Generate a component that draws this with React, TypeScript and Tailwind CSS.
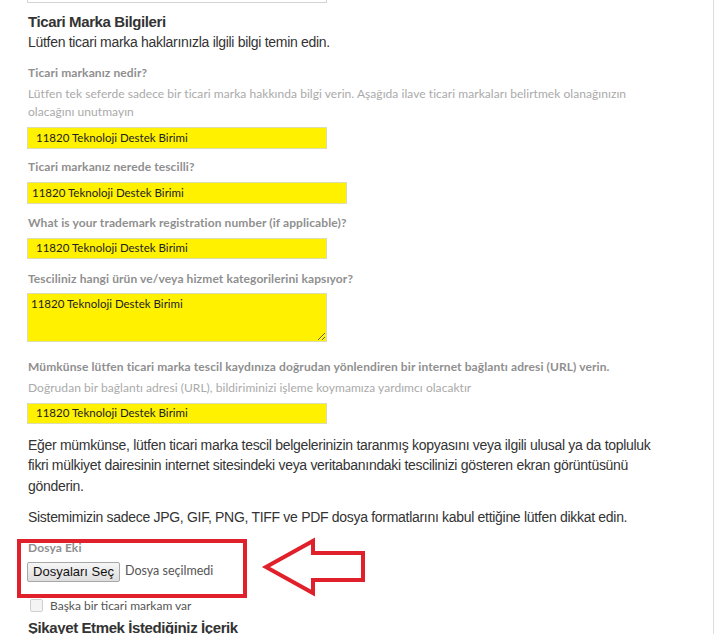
import React from "react";

const labelCls =
  "text-[12px] leading-[16px] font-bold text-[#8f8f8f] tracking-[0.1px] [font-family:Lato,sans-serif]";
const helpCls =
  "text-[12px] leading-[18px] text-[#aaaaaa] tracking-[0.05px] [font-family:Lato,sans-serif]";
const inputBase =
  "bg-[#fff100] border border-[#dcdcb4] text-[11.5px] text-[#222] flex items-center [font-family:Lato,sans-serif] -ml-px";
const bodyCls = "text-[14px] leading-[20.5px] text-[#333] tracking-[-0.3px]";

export default function App() {
  return (
    <div className="relative w-[716px] h-[634px] overflow-hidden bg-white [font-family:'Liberation_Sans',Arial,sans-serif]">
      <div className="w-[714px] h-[634px] border-r border-[#dddddd] pl-[28px] flex flex-col">
        <div className="h-[3px] w-[300px] shrink-0 -ml-px border border-t-0 border-[#d4d4d4]" />
        <h2 className="mt-[9px] text-[15px] leading-[20px] font-bold text-[#333] tracking-[-0.4px]">Ticari Marka Bilgileri</h2>
        <p className={bodyCls}>Lütfen ticari marka haklarınızla ilgili bilgi temin edin.</p>

        <div className={`${labelCls} mt-[12px]`}>Ticari markanız nedir?</div>
        <div className={`${helpCls} mt-[4px] w-[610px]`}>
          Lütfen tek seferde sadece bir ticari marka hakkında bilgi verin. Aşağıda ilave ticari markaları belirtmek olanağınızın olacağını unutmayın
        </div>
        <div className={`${inputBase} mt-[6px] h-[22px] w-[300px] pl-[8px] shrink-0`}>11820 Teknoloji Destek Birimi</div>

        <div className={`${labelCls} mt-[10px]`}>Ticari markanız nerede tescilli?</div>
        <div className={`${inputBase} mt-[7px] h-[22px] w-[320px] pl-[4px] shrink-0`}>11820 Teknoloji Destek Birimi</div>

        <div className={`${labelCls} mt-[11px]`}>What is your trademark registration number (if applicable)?</div>
        <div className={`${inputBase} mt-[7px] h-[21px] w-[300px] pl-[8px] shrink-0`}>11820 Teknoloji Destek Birimi</div>

        <div className={`${labelCls} mt-[12px]`}>Tesciliniz hangi ürün ve/veya hizmet kategorilerini kapsıyor?</div>
        <textarea
          readOnly
          defaultValue="11820 Teknoloji Destek Birimi"
          className="mt-[6px] -ml-px w-[300px] h-[49px] min-h-[49px] shrink-0 block bg-[#fff100] border border-[#dcdcb4] text-[11.5px] leading-[16px] text-[#222] pl-[3px] pt-[2px] outline-none [font-family:Lato,sans-serif]"
        />

        <div className={`${labelCls} mt-[17px]`}>Mümkünse lütfen ticari marka tescil kaydınıza doğrudan yönlendiren bir internet bağlantı adresi (URL) verin.</div>
        <div className={`${helpCls} mt-[4px]`}>Doğrudan bir bağlantı adresi (URL), bildiriminizi işleme koymamıza yardımcı olacaktır</div>
        <div className={`${inputBase} mt-[6px] h-[21px] w-[300px] pl-[8px] shrink-0`}>11820 Teknoloji Destek Birimi</div>

        <p className={`${bodyCls} mt-[11px] w-[642px]`}>
          Eğer mümkünse, lütfen ticari marka tescil belgelerinizin taranmış kopyasını veya ilgili ulusal ya da topluluk fikri mülkiyet dairesinin internet sitesindeki veya veritabanındaki tescilinizi gösteren ekran görüntüsünü gönderin.
        </p>
        <p className={`${bodyCls} mt-[11px]`}>
          Sistemimizin sadece JPG, GIF, PNG, TIFF ve PDF dosya formatlarını kabul ettiğine lütfen dikkat edin.
        </p>

        <div className={`${labelCls} mt-[12px]`}>Dosya Eki</div>
        <div className="mt-[6px] h-[20px] shrink-0 flex items-center gap-[5px]">
          <div className="-ml-px h-[20px] w-[93px] flex items-center justify-center rounded-[2px] border border-[#a7a7a7] bg-gradient-to-b from-[#f6f6f6] to-[#dedede] text-[13px] text-[#111]">
            Dosyaları Seç
          </div>
          <span className="text-[12.5px] text-[#555] [font-family:Lato,sans-serif]">Dosya seçilmedi</span>
        </div>

        <div className="mt-[16px] h-[16px] shrink-0 ml-[2px] flex items-center gap-[7px]">
          <div className="w-[13px] h-[13px] rounded-[2px] border border-[#d0d0d0] bg-[#f4f4f4]" />
          <span className="text-[12px] text-[#555] [font-family:Lato,sans-serif]">Başka bir ticari markam var</span>
        </div>

        <h2 className="mt-[4px] text-[15px] leading-[20px] font-bold text-[#333] tracking-[-0.4px]">Şikayet Etmek İstediğiniz İçerik</h2>
      </div>

      {/* annotation overlays */}
      <div className="absolute left-[17px] top-[539px] w-[230px] h-[59px] border-[4px] border-[#e0202a]" />
      <svg className="absolute left-0 top-0" width="716" height="634" viewBox="0 0 716 634">
        <polygon
          points="266,567 313,541 313,553 363,553 363,580 313,580 313,593"
          fill="none"
          stroke="#e0202a"
          strokeWidth="4"
          strokeLinejoin="miter"
        />
      </svg>
    </div>
  );
}
